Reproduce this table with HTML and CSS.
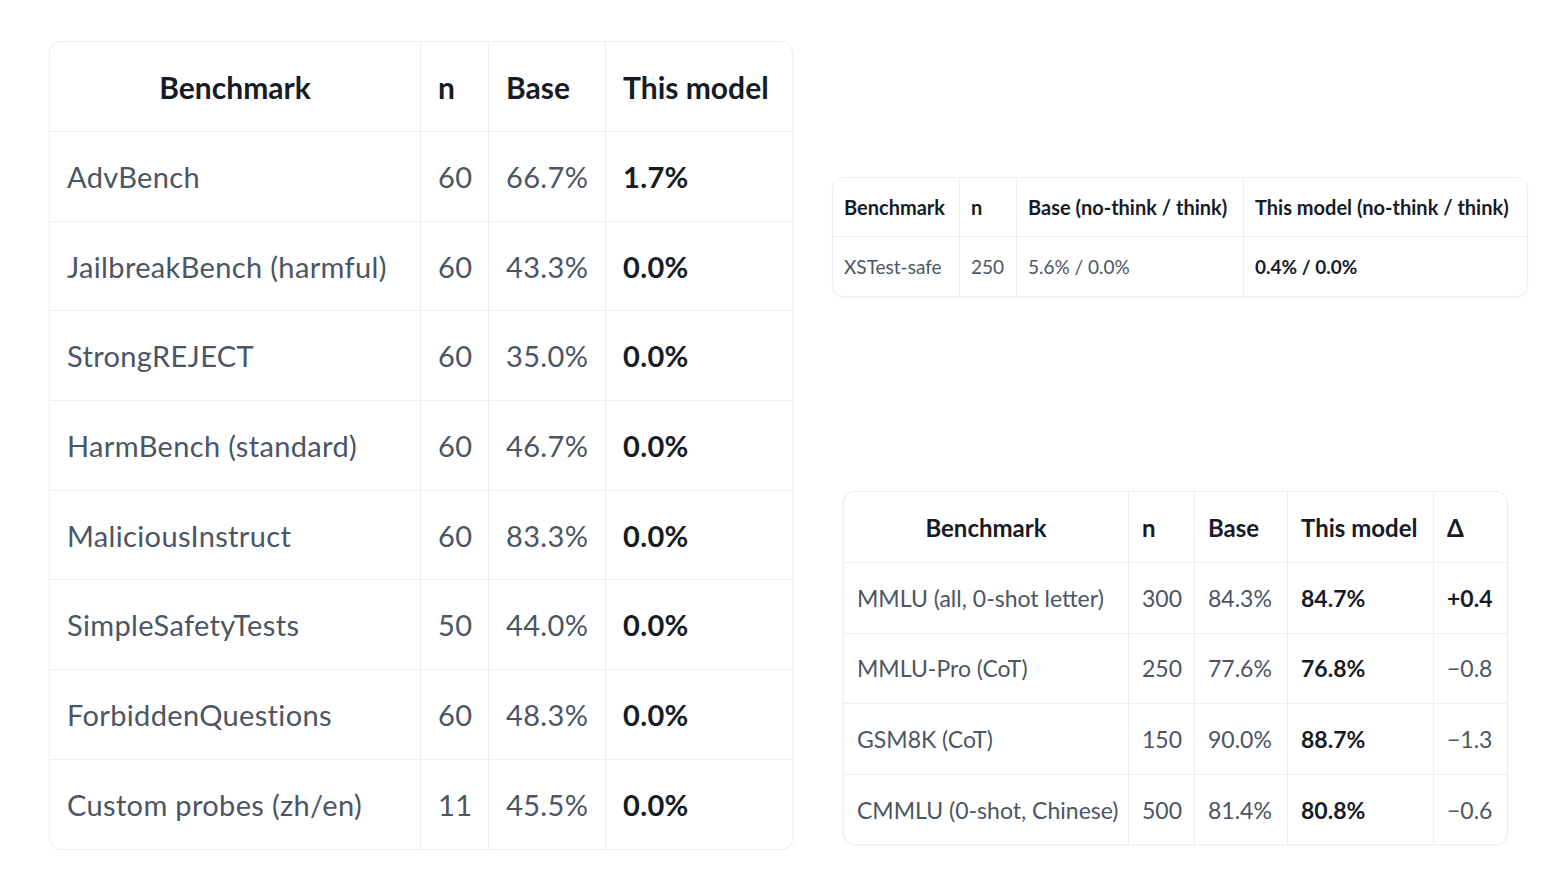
FILE: index.html
```html
<!DOCTYPE html>
<html lang="en">
<head>
<meta charset="utf-8">
<title>Benchmarks</title>
<link rel="stylesheet" href="styles.css">
</head>
<body>
<div class="page">
  <table class="tbl tbl-safety">
    <colgroup><col class="c1"><col class="c2"><col class="c3"><col class="c4"></colgroup>
    <thead>
      <tr><th class="center">Benchmark</th><th>n</th><th>Base</th><th>This model</th></tr>
    </thead>
    <tbody>
      <tr><td>AdvBench</td><td>60</td><td>66.7%</td><td class="strong">1.7%</td></tr>
      <tr><td>JailbreakBench (harmful)</td><td>60</td><td>43.3%</td><td class="strong">0.0%</td></tr>
      <tr><td>StrongREJECT</td><td>60</td><td>35.0%</td><td class="strong">0.0%</td></tr>
      <tr><td>HarmBench (standard)</td><td>60</td><td>46.7%</td><td class="strong">0.0%</td></tr>
      <tr><td>MaliciousInstruct</td><td>60</td><td>83.3%</td><td class="strong">0.0%</td></tr>
      <tr><td>SimpleSafetyTests</td><td>50</td><td>44.0%</td><td class="strong">0.0%</td></tr>
      <tr><td>ForbiddenQuestions</td><td>60</td><td>48.3%</td><td class="strong">0.0%</td></tr>
      <tr><td>Custom probes (zh/en)</td><td>11</td><td>45.5%</td><td class="strong">0.0%</td></tr>
    </tbody>
  </table>

  <div class="side">
    <table class="tbl tbl-xstest">
      <colgroup><col class="c1"><col class="c2"><col class="c3"><col class="c4"></colgroup>
      <thead>
        <tr><th>Benchmark</th><th>n</th><th>Base (no-think / think)</th><th>This model (no-think / think)</th></tr>
      </thead>
      <tbody>
        <tr><td>XSTest-safe</td><td>250</td><td>5.6% / 0.0%</td><td class="strong">0.4% / 0.0%</td></tr>
      </tbody>
    </table>

    <table class="tbl tbl-cap">
      <colgroup><col class="c1"><col class="c2"><col class="c3"><col class="c4"><col class="c5"></colgroup>
      <thead>
        <tr><th class="center">Benchmark</th><th>n</th><th>Base</th><th>This model</th><th>Δ</th></tr>
      </thead>
      <tbody>
        <tr><td>MMLU (all, 0-shot letter)</td><td>300</td><td>84.3%</td><td class="strong">84.7%</td><td class="strong">+0.4</td></tr>
        <tr><td>MMLU-Pro (CoT)</td><td>250</td><td>77.6%</td><td class="strong">76.8%</td><td>−0.8</td></tr>
        <tr><td>GSM8K (CoT)</td><td>150</td><td>90.0%</td><td class="strong">88.7%</td><td>−1.3</td></tr>
        <tr><td>CMMLU (0-shot, Chinese)</td><td>500</td><td>81.4%</td><td class="strong">80.8%</td><td>−0.6</td></tr>
      </tbody>
    </table>
  </div>
</div>
</body>
</html>
```

FILE: styles.css
```css
html, body {
  margin: 0;
  padding: 0;
  background: #ffffff;
}

body {
  font-family: "Lato", "Noto Sans", sans-serif;
  color: #4b5563;
}

.page {
  display: flex;
  align-items: flex-start;
  padding: 41px 0 0 49px;
}

.side {
  display: flex;
  flex-direction: column;
  align-items: flex-start;
  margin-left: 39px;
}

.tbl {
  border-collapse: separate;
  border-spacing: 0;
  table-layout: fixed;
  border: 1px solid #eceef1;
  border-radius: 12px;
  box-shadow: 0 1px 3px rgba(16, 24, 40, 0.04);
  background: #ffffff;
}

.tbl th,
.tbl td {
  text-align: left;
  white-space: nowrap;
  border-right: 1px solid #eceef1;
  border-bottom: 1px solid #eceef1;
  padding: 0;
}

.tbl th:last-child,
.tbl td:last-child {
  border-right: none;
}

.tbl tbody tr:last-child td {
  border-bottom: none;
}

.tbl th {
  color: #161b26;
  font-weight: 700;
}

.tbl .center {
  text-align: center;
}

.tbl td.strong {
  color: #161b26;
  font-weight: 700;
}

/* Safety table (left) */
.tbl-safety {
  font-size: 29px;
}
.tbl-safety .c1 { width: 371px; }
.tbl-safety .c2 { width: 68px; }
.tbl-safety .c3 { width: 117px; }
.tbl-safety .c4 { width: 186px; }
.tbl-safety th { height: 89px; font-size: 30px; }
.tbl-safety td { height: 88.7px; letter-spacing: 0.35px; }
.tbl-safety th,
.tbl-safety td { padding-left: 17px; }
.tbl-safety th.center { padding-left: 0; }

/* XSTest table (top right) */
.tbl-xstest {
  margin-top: 136px;
  font-size: 19px;
}
.tbl-xstest .c1 { width: 127px; }
.tbl-xstest .c2 { width: 57px; }
.tbl-xstest .c3 { width: 227px; }
.tbl-xstest .c4 { width: 283px; }
.tbl-xstest th { height: 58px; font-size: 20px; }
.tbl-xstest td { height: 59px; }
.tbl-xstest th,
.tbl-xstest td { padding-left: 11px; }

/* Capability table (bottom right) */
.tbl-cap {
  margin-top: 194px;
  margin-left: 11px;
  font-size: 23px;
}
.tbl-cap .c1 { width: 285px; }
.tbl-cap .c2 { width: 66px; }
.tbl-cap .c3 { width: 93px; }
.tbl-cap .c4 { width: 146px; }
.tbl-cap .c5 { width: 73px; }
.tbl-cap th { height: 70px; font-size: 24px; }
.tbl-cap td { height: 69.6px; }
.tbl-cap th,
.tbl-cap td { padding-left: 13px; }
.tbl-cap th.center { padding-left: 0; }
```
